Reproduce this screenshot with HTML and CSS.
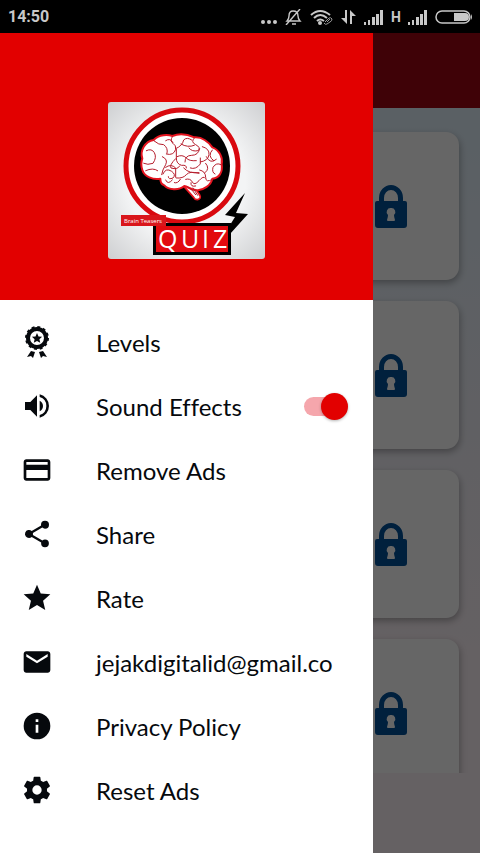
FILE: index.html
```html
<!DOCTYPE html>
<html lang="en">
<head>
    <meta charset="UTF-8">
    <meta name="viewport" content="width=device-width, initial-scale=1.0">
    <title>Brain Teasers Quiz</title>
    <link rel="stylesheet" href="styles.css">
</head>
<body>
    <svg class="defs" width="0" height="0" aria-hidden="true">
        <symbol id="lock" viewBox="0 0 32 43">
            <path fill-rule="evenodd" d="M4 16v-3a12 13 0 0 1 24 0v3h2q2 0 2 2v22q0 3-3 3H3q-3 0-3-3V18q0-2 2-2zM9 16h14v-3a7 8 0 0 0-14 0zM16 23a4 4 0 0 0-3 7q0 2-1 5 0 1 1 1h6q1 0 1-1-1-3-1-5a4 4 0 0 0-3-7z"/>
        </symbol>
        <symbol id="signal" viewBox="0 0 19 16">
            <path d="M0 13h2v3H0zM4 11h2v5H4zM8 8h3v8H8zM12 5h3v11h-3zM16 1h3v15h-3z"/>
        </symbol>
    </svg>

    <div class="statusBar">
        <span class="time">14:50</span>
        <div class="statusIcons">
            <svg width="16" height="16" viewBox="0 0 16 16"><circle cx="2" cy="13" r="2"/><circle cx="8" cy="13" r="2"/><circle cx="14" cy="13" r="2"/></svg>
            <svg width="17" height="16" viewBox="0 0 17 16"><path class="line" d="M3 12h12q-2-2-2-5 0-5-5-5-4 0-4 5 0 3-2 5zM15 0L1 16M7 15h4"/></svg>
            <svg width="23" height="16" viewBox="0 0 23 16">
                <path class="arc" d="M1 6q9-8 19 0M4 9q6-6 13 0M7 12q3-3 7 0"/>
                <circle cx="10" cy="14" r="2"/>
                <path class="link" d="M15 13l4-4q2-1 3 1 0 2-2 3l-3 2q-2 1-3-1M17 13l3-3"/>
            </svg>
            <svg width="15" height="16" viewBox="0 0 15 16"><path d="M4 1h2v14L0 9h4zM9 1l6 6h-4v8H9z"/></svg>
            <svg width="19" height="16"><use href="#signal"/></svg>
            <span class="network">H</span>
            <svg width="19" height="16"><use href="#signal"/></svg>
            <svg width="38" height="16" viewBox="0 0 38 16"><rect class="battery" x="1" y="2" width="34" height="12" rx="6"/><path d="M19 4h11q4 0 4 4t-4 4H19zM36 5q2 3 0 6z"/></svg>
        </div>
    </div>

    <div class="screen">
        <div class="toolbar"></div>
        <main class="levels">
            <div class="card"><svg class="lock" width="32" height="43"><use href="#lock"/></svg></div>
            <div class="card"><svg class="lock" width="32" height="43"><use href="#lock"/></svg></div>
            <div class="card"><svg class="lock" width="32" height="43"><use href="#lock"/></svg></div>
            <div class="card"><svg class="lock" width="32" height="43"><use href="#lock"/></svg></div>
        </main>
        <div class="adSpace"></div>

        <div class="overlay"></div>
        <nav class="drawer">
            <div class="drawerHeader">
                <svg class="logo" width="157" height="157" viewBox="0 0 157 157">
                    <defs>
                        <radialGradient id="paper" r="75%">
                            <stop offset="50%" stop-color="#f3f4f5"/>
                            <stop offset="100%" stop-color="#c9cacc"/>
                        </radialGradient>
                    </defs>
                    <rect width="157" height="157" rx="3" fill="url(#paper)"/>
                    <circle cx="74" cy="64" r="56" fill="#fff" stroke="#d9090f" stroke-width="5"/>
                    <circle cx="74" cy="64" r="48"/>
                    <!-- brain -->
                    <g transform="translate(27 26) scale(.3333)" stroke-linecap="round" stroke-linejoin="round">
                        <path d="M142 170l34 38q4 8 12 7 12-4 6-14l-20-30z" fill="#fff" stroke="#e5141f" stroke-width="5"/>
                        <path d="M22 92C14 68 30 40 56 36C72 18 100 20 112 24C138 14 164 22 178 28C202 26 222 44 232 58C254 66 264 90 260 108C264 134 252 150 232 152C228 174 204 184 192 186C172 190 160 176 148 174C132 188 100 186 88 172C78 168 76 160 76 152C54 156 28 146 22 126C18 114 18 102 22 92Z" fill="#fff" stroke="#e5141f" stroke-width="6"/>
                        <path d="M34 68q16-8 24 6t-4 32q-16 6-28 0M56 38q16 14 30 12 14 10 10 26M112 26q-8 14 2 20t8 18q-6 20-28 14M92 38q14-10 22 6M82 86q18 8 10 24-10 16-12 30M32 128q22-10 36 0M122 62q20-8 24-26 10-10 24 0M138 48q20 12 40 4M178 30q-12 12 4 20t8 18q-20 4-28-8M124 64v26q0 18 16 22 16-2 14 8M126 86q16-8 28 4 8 10 30 8M194 62q-4 20-24 20t-20 20M202 56q22 6 20 24t-26 22M196 90v18q-14 18-30 12M232 66q-16 18 4 32M214 86q12 24 30 8M258 110q-14-8-24 8-4 16 6 20M212 106q14 16-2 28M194 126q18 4 18 22t20 6M122 92q-20 20-14 28 20 6 26-6M92 118q16-12 30 2v28M84 138q8-20 26-8 14 10 4 20-14 6-14-4M92 156q6 16 20 0M124 150q20 2 30-10t38-4M146 120q16 18 46 14M136 154q-8 14-18 10M152 154q14-4 20 8t20-4 18-8M168 164q-2 14 14 10M158 176q16 10 24 24M174 180l14 22" fill="none" stroke="#b51d2c" stroke-width="3"/>
                    </g>
                    <path d="M137 91L117 113l10 2-5 8v9l18-20-12-1z"/>
                    <rect x="45" y="121" width="78" height="32"/>
                    <rect x="48" y="124" width="72" height="26" fill="#e20a0f"/>
                    <rect x="13" y="113" width="45" height="11" fill="#d9161b"/>
                    <text class="logoSmall" x="16" y="121">Brain Teasers</text>
                    <text class="logoBig" x="50 73 94 105" y="146">QUIZ</text>
                </svg>
            </div>

            <ul class="menu">
                <li>
                    <a class="item" href="#levels">
                        <svg class="icon" viewBox="0 0 32 32">
                            <circle cx="16" cy="12" r="9" fill="none" stroke="#06090d" stroke-width="4"/>
                            <circle cx="16" cy="12" r="11" fill="none" stroke="#06090d" stroke-width="2" stroke-dasharray="2.9 2.86"/>
                            <path d="M16 7l1.5 3.4 3.6.4-2.7 2.4.8 3.6-3.2-1.9-3.2 1.9.8-3.6-2.7-2.4 3.6-.4zM10 25l4 1-2 6-2-2-4 1zM22 25l-4 1 2 6 2-2 4 1z"/>
                        </svg>
                        Levels
                    </a>
                </li>
                <li class="item">
                    <svg class="icon" viewBox="0 0 24 24"><path d="M3 9v6h4l5 5V4L7 9zM16.5 12A4.5 4.5 0 0 0 14 7.97v8.05c1.48-.73 2.5-2.25 2.5-4.02zM14 3.23v2.06a7 7 0 0 1 0 13.42v2.06a9 9 0 0 0 0-17.54z"/></svg>
                    <label for="sound">Sound Effects</label>
                    <input type="checkbox" id="sound" class="switch" checked>
                </li>
                <li>
                    <a class="item" href="#remove">
                        <svg class="icon" viewBox="0 0 24 24"><path d="M20 4H4c-1.11 0-2 .89-2 2v12c0 1.11.89 2 2 2h16c1.11 0 2-.89 2-2V6c0-1.11-.89-2-2-2zm0 14H4v-6h16zm0-10H4V6h16z"/></svg>
                        Remove Ads
                    </a>
                </li>
                <li>
                    <a class="item" href="#share">
                        <svg class="icon" viewBox="0 0 24 24"><path d="M18 16.08c-.76 0-1.44.3-1.96.77L8.91 12.7c.05-.23.09-.46.09-.7s-.04-.47-.09-.7l7.05-4.11c.54.5 1.25.81 2.04.81a3 3 0 1 0-3-3c0 .24.04.47.09.7L8.04 9.81A3 3 0 1 0 6 15c.79 0 1.5-.31 2.04-.81l7.12 4.16c-.05.21-.08.43-.08.65a2.92 2.92 0 1 0 2.92-2.92z"/></svg>
                        Share
                    </a>
                </li>
                <li>
                    <a class="item" href="#rate">
                        <svg class="icon" viewBox="0 0 24 24"><path d="M12 17.27L18.18 21l-1.64-7.03L22 9.24l-7.19-.61L12 2 9.19 8.63 2 9.24l5.46 4.73L5.82 21z"/></svg>
                        Rate
                    </a>
                </li>
                <li>
                    <a class="item" href="mailto:jejakdigitalid@gmail.co">
                        <svg class="icon" viewBox="0 0 24 24"><path d="M20 4H4c-1.1 0-2 .9-2 2v12c0 1.1.9 2 2 2h16c1.1 0 2-.9 2-2V6c0-1.1-.9-2-2-2zm0 4l-8 5-8-5V6l8 5 8-5z"/></svg>
                        jejakdigitalid@gmail.co
                    </a>
                </li>
                <li>
                    <a class="item" href="#privacy">
                        <svg class="icon" viewBox="0 0 24 24"><path d="M12 2a10 10 0 1 0 0 20 10 10 0 0 0 0-20zm1 15h-2v-6h2zm0-8h-2V7h2z"/></svg>
                        Privacy Policy
                    </a>
                </li>
                <li>
                    <a class="item" href="#reset">
                        <svg class="icon" viewBox="0 0 24 24"><path d="M19.43 12.98c.04-.32.07-.64.07-.98s-.03-.66-.07-.98l2.11-1.65c.19-.15.24-.42.12-.64l-2-3.46c-.12-.22-.39-.3-.61-.22l-2.49 1c-.52-.4-1.08-.73-1.69-.98l-.38-2.65A.49.49 0 0 0 14 2h-4c-.25 0-.46.18-.49.42l-.38 2.65c-.61.25-1.17.59-1.69.98l-2.49-1c-.23-.09-.49 0-.61.22l-2 3.46c-.13.22-.07.49.12.64l2.11 1.65c-.04.32-.07.65-.07.98s.03.66.07.98l-2.11 1.65c-.19.15-.24.42-.12.64l2 3.46c.12.22.39.3.61.22l2.49-1c.52.4 1.08.73 1.69.98l.38 2.65c.03.24.24.42.49.42h4c.25 0 .46-.18.49-.42l.38-2.65c.61-.25 1.17-.59 1.69-.98l2.49 1c.23.09.49 0 .61-.22l2-3.46c.12-.22.07-.49-.12-.64zM12 15.5a3.5 3.5 0 1 1 0-7 3.5 3.5 0 0 1 0 7z"/></svg>
                        Reset Ads
                    </a>
                </li>
            </ul>
        </nav>
    </div>
</body>
</html>
```
FILE: styles.css
```css
* {
    box-sizing: border-box;
}

body {
    margin: 0;
    height: 100vh;
    display: flex;
    flex-direction: column;
    overflow: hidden;
    font-family: Lato, sans-serif;
    color: #06090d;
}

.defs {
    position: absolute;
}

.statusBar {
    display: flex;
    justify-content: space-between;
    align-items: center;
    height: 33px;
    flex-shrink: 0;
    padding: 0 7px 0 8px;
    background-color: #000;
    color: #c8c8c8;
    font-family: Roboto, sans-serif;
    font-size: 16px;
    font-weight: bold;
}

.statusIcons {
    display: flex;
    align-items: center;
    gap: 8px;
    fill: #c8c8c8;
}

.statusIcons .line {
    fill: none;
    stroke: #c8c8c8;
    stroke-width: 1.4;
}

.statusIcons .arc {
    fill: none;
    stroke: #c8c8c8;
    stroke-width: 2;
}

.statusIcons .link {
    fill: #000;
    stroke: #999;
    stroke-width: 1;
}

.statusIcons .battery {
    fill: none;
    stroke: #c8c8c8;
    stroke-width: 1.5;
}

.network {
    width: 9px;
    font-size: 14px;
}

.screen {
    position: relative;
    flex: 1;
    min-height: 0;
    display: flex;
    flex-direction: column;
    background: linear-gradient(#dceffa, #fcf2f7 75%);
}

.toolbar {
    height: 75px;
    flex-shrink: 0;
    background-color: #9e0512;
}

/* level list behind the drawer */
.levels {
    flex: 1;
    min-height: 0;
    overflow: hidden;
    display: flex;
    flex-direction: column;
    gap: 21px;
    padding: 24px 21px 0;
}

.card {
    display: flex;
    justify-content: flex-end;
    align-items: center;
    height: 148px;
    flex-shrink: 0;
    padding-right: 52px;
    border-radius: 13px;
    background-color: #fff;
    box-shadow: 1px 3px 7px rgba(0, 0, 0, 0.3);
}

.lock {
    fill: #005098;
}

.adSpace {
    height: 80px;
    flex-shrink: 0;
}

.overlay {
    position: absolute;
    inset: 0;
    background-color: rgba(0, 0, 0, 0.6);
}

.drawer {
    position: absolute;
    top: 0;
    bottom: 0;
    left: 0;
    width: calc(100% - 107px);
    background-color: #fff;
}

.drawerHeader {
    display: flex;
    justify-content: center;
    padding: 69px 0 41px;
    background-color: #e20000;
}

.logo {
    display: block;
}

.logoSmall {
    font-family: "Open Sans", sans-serif;
    font-size: 6px;
    fill: #fff;
}

.logoBig {
    font-family: "Open Sans", sans-serif;
    font-size: 25px;
    fill: #fff;
}

.menu {
    margin: 0;
    padding: 10px 0;
    list-style: none;
}

.item {
    display: flex;
    align-items: center;
    gap: 43px;
    height: 64px;
    padding: 0 25px 0 21px;
    font-size: 24px;
    font-variant-ligatures: none;
    color: #06090d;
    text-decoration: none;
}

.icon {
    width: 32px;
    height: 32px;
    flex-shrink: 0;
    fill: #06090d;
}

.switch {
    position: relative;
    appearance: none;
    width: 44px;
    height: 27px;
    margin: 0 0 0 auto;
    cursor: pointer;
}

.switch::before {
    content: "";
    position: absolute;
    top: 4px;
    left: 0;
    width: 40px;
    height: 19px;
    border-radius: 10px;
    background-color: #f5a6ac;
}

.switch::after {
    content: "";
    position: absolute;
    top: 0;
    right: 0;
    width: 27px;
    height: 27px;
    border-radius: 50%;
    background-color: #e20000;
    box-shadow: 0 1px 3px rgba(0, 0, 0, 0.3);
}

.switch:not(:checked)::after {
    right: auto;
    left: 0;
}
```
